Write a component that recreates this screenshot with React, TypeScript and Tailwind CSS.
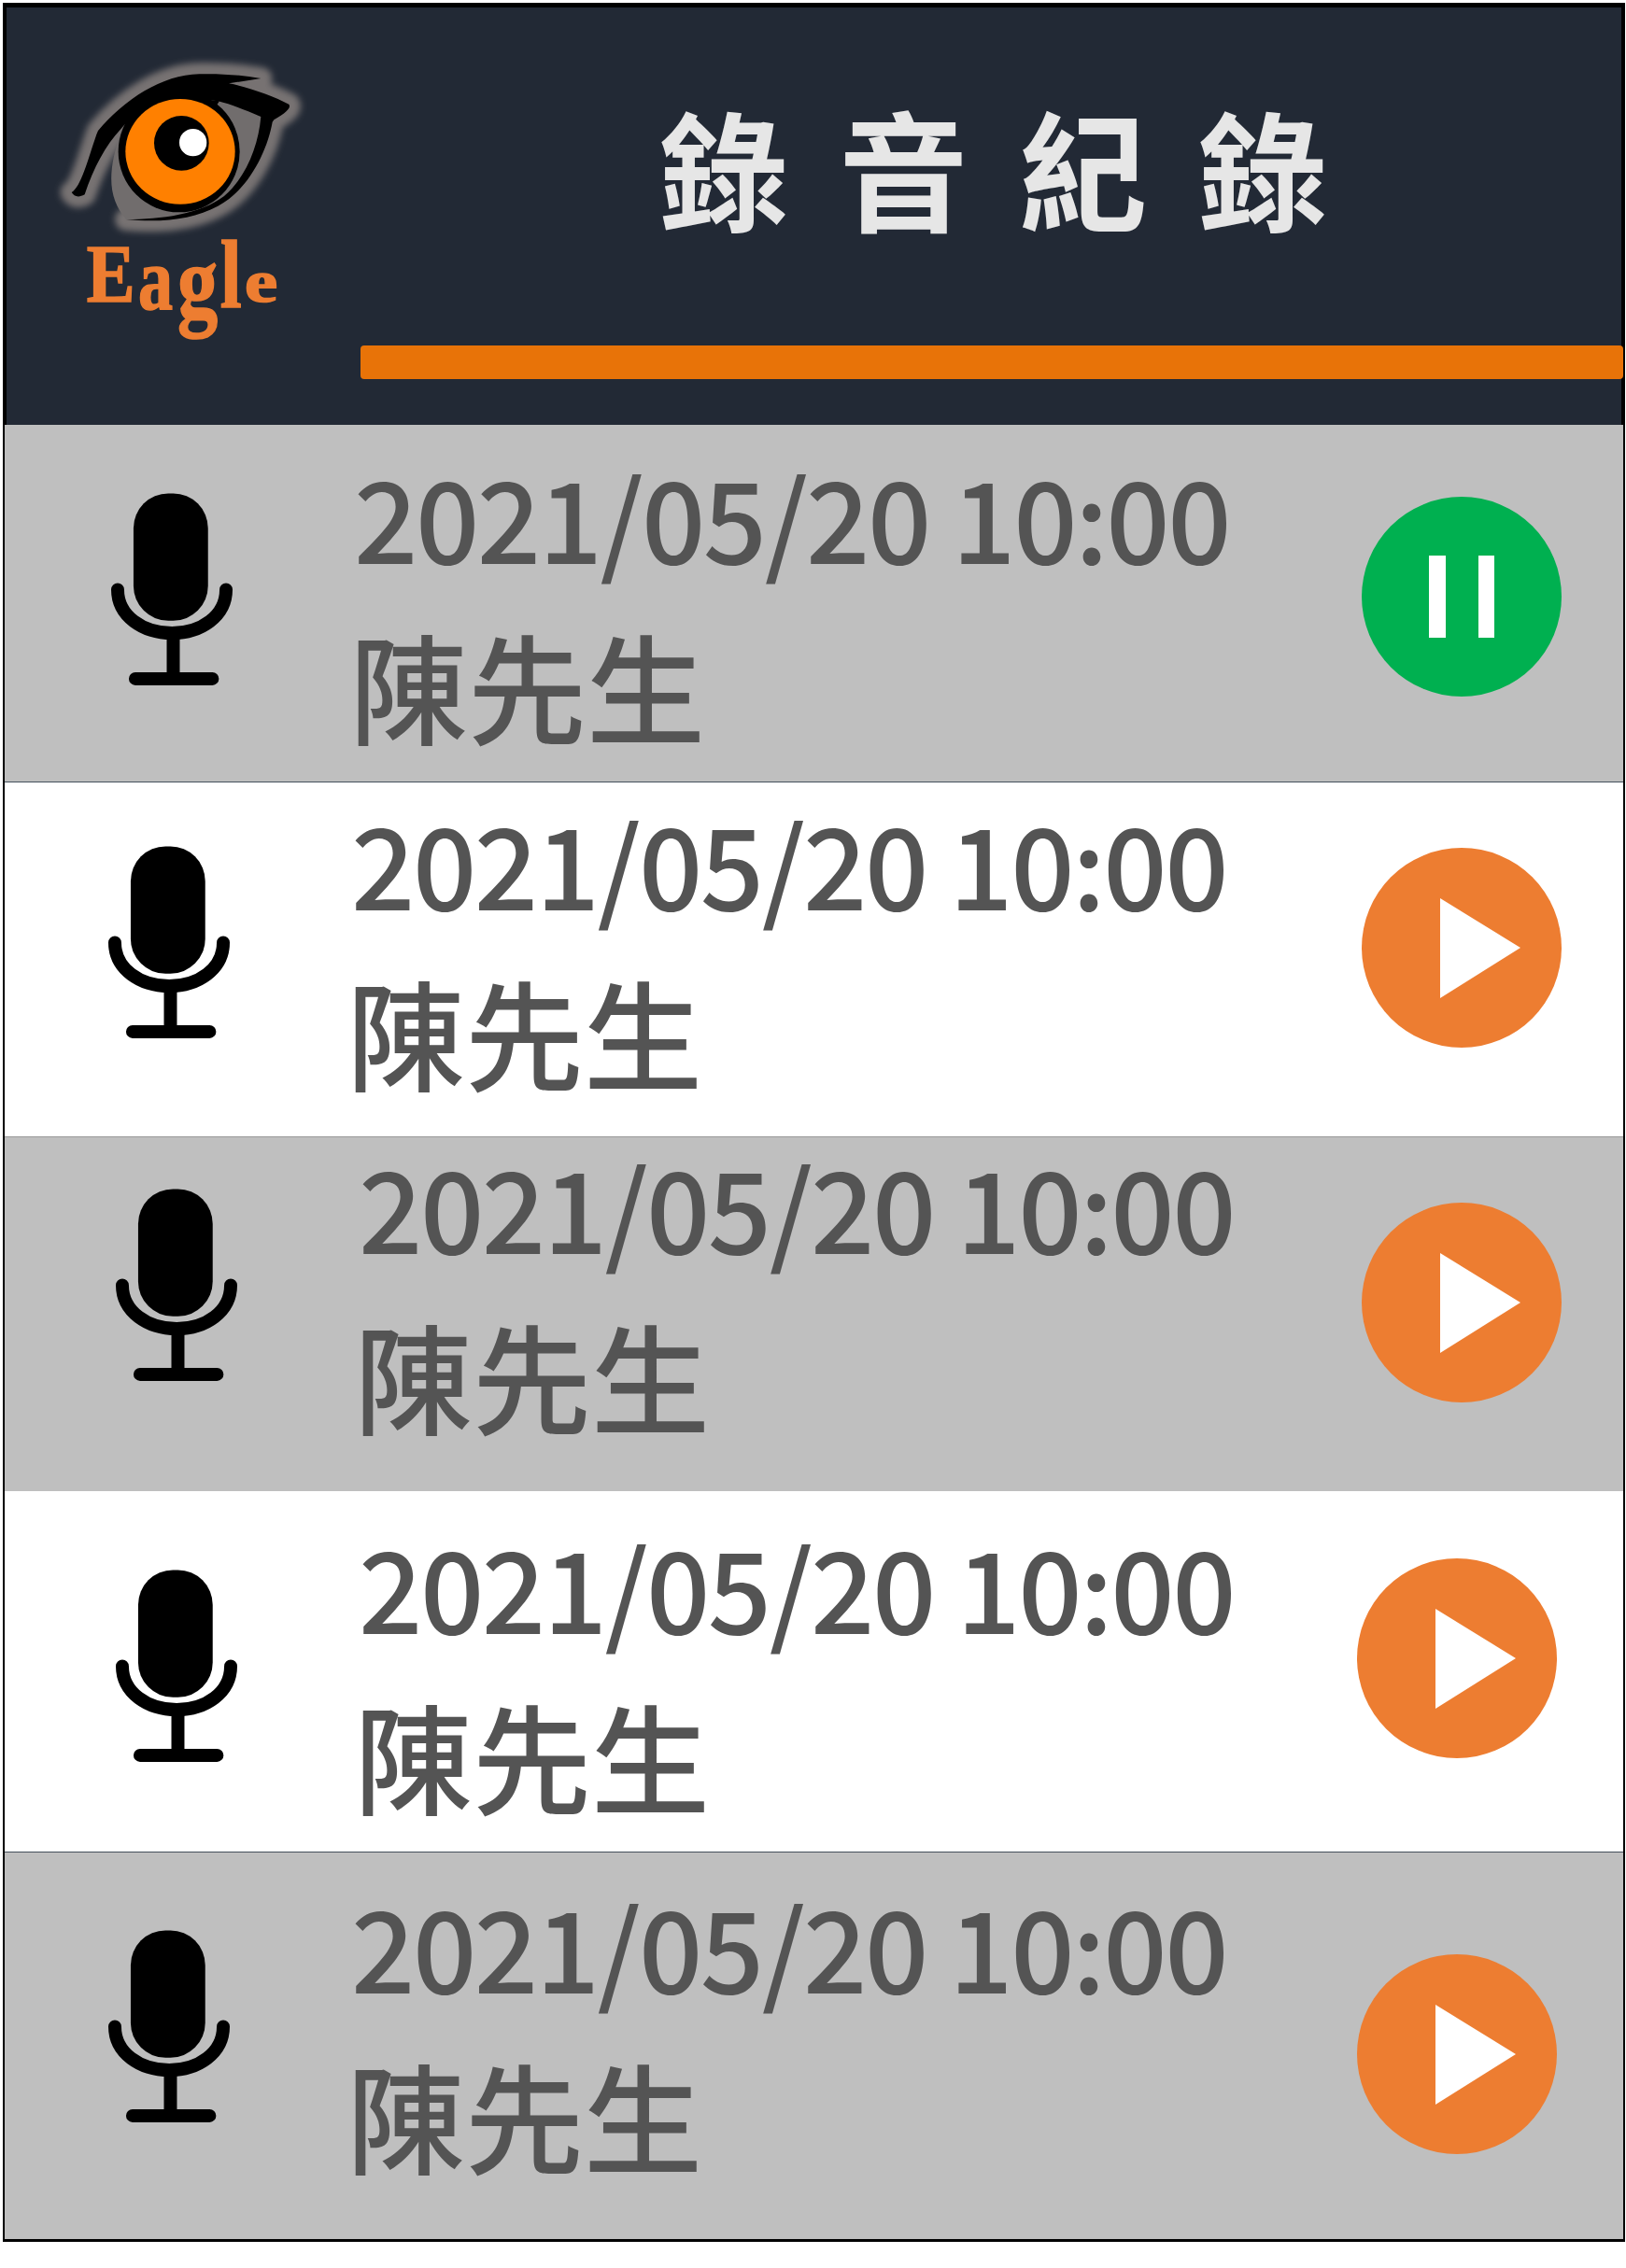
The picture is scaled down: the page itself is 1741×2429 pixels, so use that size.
const rows = [
  { bg: "bg-[#bfbfbf]", h: "h-[382px]", pl: "pl-[113px]", line: "", micTop: "mt-[73px]", textTop: "mt-[12px]", btnTop: "mt-[77px]", btnRight: "mr-[66px]", playing: true },
  { bg: "bg-white", h: "h-[380px]", pl: "pl-[110px]", line: "border-t border-[#44505c]", micTop: "mt-[68px]", textTop: "mt-[0px]", btnTop: "mt-[70px]", btnRight: "mr-[66px]", playing: false },
  { bg: "bg-[#bfbfbf]", h: "h-[380px]", pl: "pl-[118px]", line: "border-t border-[#9a9a9a]", micTop: "mt-[55px]", textTop: "mt-[-12px]", btnTop: "mt-[70px]", btnRight: "mr-[66px]", playing: false },
  { bg: "bg-white", h: "h-[386px]", pl: "pl-[118px]", line: "", micTop: "mt-[84px]", textTop: "mt-[16px]", btnTop: "mt-[72px]", btnRight: "mr-[71px]", playing: false },
  { bg: "bg-[#bfbfbf]", h: "h-[415px]", pl: "pl-[110px]", line: "border-t border-[#44505c]", micTop: "mt-[83px]", textTop: "mt-[14px]", btnTop: "mt-[109px]", btnRight: "mr-[71px]", playing: false },
];

function Mic() {
  return (
    <svg viewBox="175 145 400 620" className="block h-[207px] w-[133px]">
      <rect x="250" y="145" width="240" height="410" rx="112" fill="#000" />
      <path d="M199 455C199 540 280 595 374 595C468 595 548 540 548 455" fill="none" stroke="#000" strokeWidth="42" strokeLinecap="round" />
      <path d="M378 600V742M256 742H504" fill="none" stroke="#000" strokeWidth="42" strokeLinecap="round" />
    </svg>
  );
}

const letters = [
  { c: "E", x: 278, y: 970, size: 268, sx: 0.87 },
  { c: "a", x: 444, y: 993, size: 285, sx: 0.78 },
  { c: "g", x: 570, y: 1017, size: 332, sx: 0.78 },
  { c: "l", x: 707, y: 988, size: 310, sx: 0.8 },
  { c: "e", x: 786, y: 968, size: 190, sx: 1.25 },
];

function Logo() {
  const eye =
    "M230 618C260 600 280 520 310 432L315 420C400 320 520 240 640 238C700 236 770 240 838 252L735 268C800 280 880 310 928 335C935 345 925 358 880 385L875 392C860 480 800 610 700 662C620 705 520 716 405 705C520 704 640 690 720 630C790 570 830 470 838 375C780 350 740 335 700 325L640 318C520 320 430 360 388 415C340 465 300 540 272 625C250 637 238 630 230 618Z";
  return (
    <svg viewBox="21 24 1134 1341" className="block h-[447px] w-[378px]">
      <defs>
        <filter id="halo" x="-20%" y="-20%" width="140%" height="140%">
          <feGaussianBlur stdDeviation="11" />
        </filter>
      </defs>
      <path d={eye} fill="#777272" stroke="#777272" strokeWidth="72" strokeLinejoin="round" filter="url(#halo)" />
      <path d="M390 420C500 300 700 300 840 375C830 500 780 620 700 660C620 705 520 716 405 705C350 640 340 560 390 420Z" fill="#716d6d" />
      <path d={eye} fill="#000" />
      <circle cx="575" cy="487" r="195" fill="#000" />
      <path d="M640 318L705 325L640 420Z" fill="#000" />
      <ellipse cx="579" cy="487" rx="176" ry="169" fill="#ff8000" />
      <circle cx="583" cy="460" r="88" fill="#000" />
      <circle cx="620" cy="458" r="44" fill="#fff" />
      {letters.map((l, i) => (
        <text
          key={i}
          transform={`translate(${l.x} ${l.y}) scale(${l.sx} 1)`}
          fill="#ed7d31"
          stroke="#ed7d31"
          strokeWidth="5"
          fontFamily="'Liberation Serif', serif"
          fontWeight="700"
          fontSize={l.size}
        >
          {l.c}
        </text>
      ))}
    </svg>
  );
}

export default function App() {
  return (
    <div className="min-h-[2429px] bg-white pl-[3px] pt-[3px] font-['Noto_Sans_CJK_TC','Noto_Sans',sans-serif]">
      <div className="w-[1737px] border-x-2 border-b-[3px] border-black">
        <header className="flex h-[452px] border-l-2 border-r-2 border-t-[5px] border-black bg-[#222935]">
          <Logo />
          <div className="flex min-w-0 flex-1 flex-col pl-[1px]">
            <h1 className="mt-[72px] pl-[320px] text-[138px] font-bold leading-[195px] tracking-[11.5px] text-[#e6e6e6]">錄 音 紀 錄</h1>
            <div className="mr-[-2px] mt-[95px] h-[36px] rounded-[4px] bg-[#e87308]" />
          </div>
        </header>
        {rows.map((r, i) => (
          <div key={i} className={`flex ${r.bg} ${r.h} ${r.pl} ${r.line}`}>
            <div className={`w-[261px] shrink-0 ${r.micTop}`}>
              <Mic />
            </div>
            <div className={`flex-1 font-medium text-[#545454] ${r.textTop}`}>
              <div className="text-[120px] leading-[170px] tracking-[-2.5px]">2021/05/20 10:00</div>
              <div className="ml-[-5px] mt-[6px] text-[127px] leading-[180px]">陳先生</div>
            </div>
            <div className={`${r.btnTop} ${r.btnRight} flex h-[214px] w-[214px] shrink-0 items-center justify-center rounded-full ${r.playing ? "bg-[#00b050]" : "bg-[#ed7d31]"}`}>
              {r.playing ? (
                <div className="flex gap-[35px]">
                  <div className="h-[88px] w-[18px] bg-white" />
                  <div className="h-[88px] w-[17px] bg-white" />
                </div>
              ) : (
                <svg viewBox="0 0 86 107" className="ml-[39px] h-[107px] w-[86px]">
                  <path d="M0 0L86 53L0 107Z" fill="#fff" />
                </svg>
              )}
            </div>
          </div>
        ))}
      </div>
    </div>
  );
}
